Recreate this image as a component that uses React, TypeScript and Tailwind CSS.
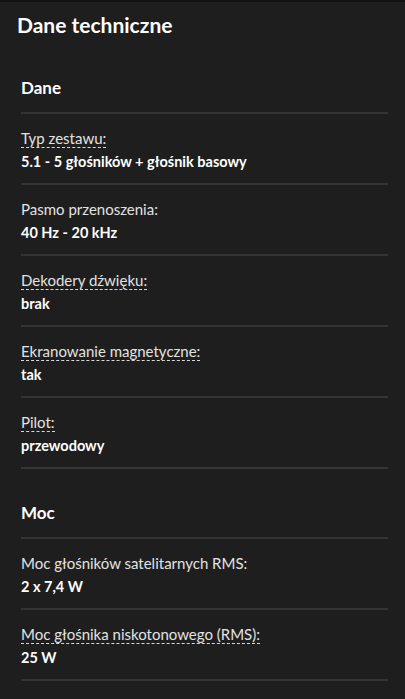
const sections = [
  {
    title: "Dane",
    rows: [
      { label: "Typ zestawu:", value: "5.1 - 5 głośników + głośnik basowy", hint: true },
      { label: "Pasmo przenoszenia:", value: "40 Hz - 20 kHz", hint: false },
      { label: "Dekodery dźwięku:", value: "brak", hint: true },
      { label: "Ekranowanie magnetyczne:", value: "tak", hint: true },
      { label: "Pilot:", value: "przewodowy", hint: true },
    ],
  },
  {
    title: "Moc",
    rows: [
      { label: "Moc głośników satelitarnych RMS:", value: "2 x 7,4 W", hint: false },
      { label: "Moc głośnika niskotonowego (RMS):", value: "25 W", hint: true },
    ],
  },
];

const SpecRow = ({ label, value, hint }: { label: string; value: string; hint: boolean }) => {
  return (
    <div className="border-b-2 border-[#343434] pt-3 pb-[10px]">
      <div className="text-[15px] leading-6 text-[#e2e2e2]">
        <span className={hint ? "border-b border-dashed border-[#d8d8d8]" : ""}>{label}</span>
      </div>
      <div className="text-[14.5px] leading-[23px] font-bold text-white">{value}</div>
    </div>
  );
};

export default function App() {
  return (
    <div
      className="min-h-[699px] bg-[#1e1e1e] border-t-2 border-[#121212] text-white"
      style={{ fontFamily: "Lato, 'Open Sans', sans-serif" }}
    >
      <h1 className="px-[17px] pt-[9px] text-[21px] leading-7 font-bold">Dane techniczne</h1>

      <div className="pl-[21px] pr-[17px]">
        {sections.map((section) => (
          <div key={section.title} className="pt-[32px] first:pt-[37px]">
            <h2 className="text-[17px] leading-6 font-bold pb-3 border-b-2 border-[#343434]">{section.title}</h2>
            {section.rows.map((row) => (
              <SpecRow key={row.label} {...row} />
            ))}
          </div>
        ))}
      </div>
    </div>
  );
}
